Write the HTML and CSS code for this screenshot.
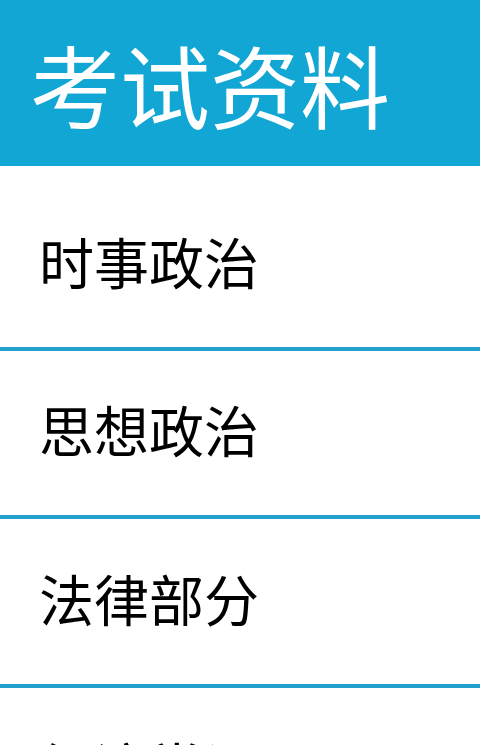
FILE: index.html
```html
<!DOCTYPE html>
<html lang="zh-CN">
<head>
<meta charset="utf-8">
<title>考试资料</title>
<link rel="stylesheet" href="styles.css">
</head>
<body>
<header class="app-bar">
  <h1 class="app-title">考试资料</h1>
</header>
<ul class="menu">
  <li class="menu-item">时事政治</li>
  <li class="menu-item">思想政治</li>
  <li class="menu-item">法律部分</li>
  <li class="menu-item">经济常识</li>
</ul>
</body>
</html>
```
FILE: styles.css
```css
html, body {
  margin: 0;
  padding: 0;
  background: #ffffff;
  font-family: "Noto Sans CJK SC", "Noto Sans", sans-serif;
}
.app-bar {
  height: 166px;
  background: #11a6d3;
  display: flex;
  align-items: center;
  padding-left: 30px;
  box-sizing: border-box;
}
.app-title {
  margin: 0;
  font-size: 90px;
  font-weight: 400;
  line-height: 1;
  color: #ffffff;
}
.menu {
  list-style: none;
  margin: 16px 0 0 0;
  padding: 0;
}
.menu-item {
  height: 168.5px;
  box-sizing: border-box;
  border-bottom: 4px solid #22a1cc;
  display: flex;
  align-items: center;
  padding-left: 39px;
  padding-bottom: 8px;
  font-size: 55px;
  line-height: 1;
  color: #000000;
}
```
